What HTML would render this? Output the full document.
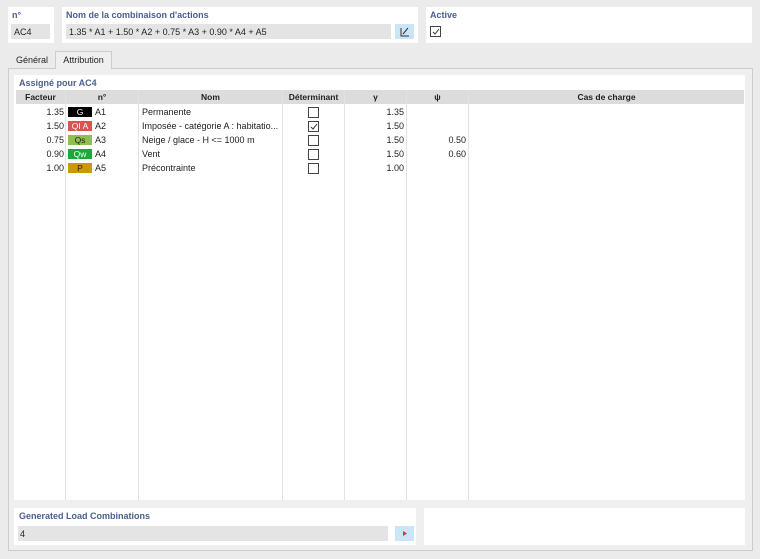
<!DOCTYPE html><html><head><style>
body{margin:0;width:760px;height:559px;background:#ebebeb;font-family:"Liberation Sans",sans-serif;font-size:9px;color:#222;position:relative;overflow:hidden}
.a{position:absolute}
.box{background:#fff}
.lbl{color:#4a5f8f;font-weight:bold;font-size:9px}
.field{background:#e4e4e4}
.cb{position:absolute;width:9px;height:9px;border:1px solid #444;background:#fff}
.tag{position:absolute;width:24px;height:10px;font-size:8.5px;text-align:center;line-height:10px}
.vl{position:absolute;top:90px;height:410px;width:1px;background:#e2e2e2}
.hd{position:absolute;top:90px;height:14px;background:#dcdcdc;line-height:14px;text-align:center;font-weight:bold;font-size:8.5px}
.r{position:absolute;text-align:right;width:30px;line-height:14px}
</style></head><body>
<div class="a box" style="left:8px;top:7px;width:46px;height:36px"></div>
<div class="a lbl" style="left:12px;top:10px">n°</div>
<div class="a field" style="left:11px;top:24px;width:39px;height:15px"></div>
<div class="a" style="left:14px;top:27px">AC4</div>
<div class="a box" style="left:62px;top:7px;width:356px;height:36px"></div>
<div class="a lbl" style="left:66px;top:10px">Nom de la combinaison d'actions</div>
<div class="a field" style="left:66px;top:24px;width:325px;height:15px"></div>
<div class="a" style="left:69px;top:27px">1.35 * A1 + 1.50 * A2 + 0.75 * A3 + 0.90 * A4 + A5</div>
<div class="a" style="left:395px;top:24px;width:19px;height:15px;background:#cce4f7"><svg width="19" height="15"><path d="M6 4v8h8M8 10l5-6" stroke="#333" fill="none" stroke-width="1"/></svg></div>
<div class="a box" style="left:426px;top:7px;width:326px;height:36px"></div>
<div class="a lbl" style="left:430px;top:10px">Active</div>
<div class="cb" style="left:430px;top:26px"></div><svg class="a" style="left:431px;top:27px" width="10" height="10"><path d="M2 5l2 2 4-5" stroke="#333" fill="none"/></svg>
<div class="a" style="left:8px;top:68px;width:745px;height:483px;border:1px solid #ccc;box-sizing:border-box;background:#efefef"></div>
<div class="a" style="left:9px;top:52px;width:46px;height:16px;line-height:16px;text-align:center">Général</div>
<div class="a" style="left:55px;top:51px;width:57px;height:18px;line-height:17px;text-align:center;background:#efefef;border:1px solid #ccc;border-bottom:none;box-sizing:border-box">Attribution</div>
<div class="a box" style="left:14px;top:75px;width:731px;height:425px"></div>
<div class="a lbl" style="left:19px;top:78px">Assigné pour AC4</div>
<div class="hd" style="left:16px;width:49px">Facteur</div>
<div class="hd" style="left:66px;width:72px">n°</div>
<div class="hd" style="left:139px;width:143px">Nom</div>
<div class="hd" style="left:283px;width:61px">Déterminant</div>
<div class="hd" style="left:345px;width:61px">γ</div>
<div class="hd" style="left:407px;width:61px">ψ</div>
<div class="hd" style="left:469px;width:275px">Cas de charge</div>
<div class="vl" style="left:65px"></div><div class="vl" style="left:138px"></div><div class="vl" style="left:282px"></div><div class="vl" style="left:344px"></div><div class="vl" style="left:406px"></div><div class="vl" style="left:468px"></div>
<div class="r" style="left:34px;top:105px">1.35<br>1.50<br>0.75<br>0.90<br>1.00</div>
<div class="tag" style="left:68px;top:107px;background:#000;color:#fff">G</div>
<div class="tag" style="left:68px;top:121px;background:#d9534f;color:#fff">QI A</div>
<div class="tag" style="left:68px;top:135px;background:#8fbf4f;color:#222">Qs</div>
<div class="tag" style="left:68px;top:149px;background:#1aaa3a;color:#fff">Qw</div>
<div class="tag" style="left:68px;top:163px;background:#c89a00;color:#222">P</div>
<div class="a" style="left:95px;top:105px;line-height:14px">A1<br>A2<br>A3<br>A4<br>A5</div>
<div class="a" style="left:142px;top:105px;line-height:14px">Permanente<br>Imposée - catégorie A : habitatio...<br>Neige / glace - H &lt;= 1000 m<br>Vent<br>Précontrainte</div>
<div class="cb" style="left:308px;top:107px"></div><div class="cb" style="left:308px;top:121px"></div><svg class="a" style="left:309px;top:122px" width="10" height="10"><path d="M2 5l2 2 4-5" stroke="#333" fill="none"/></svg><div class="cb" style="left:308px;top:135px"></div><div class="cb" style="left:308px;top:149px"></div><div class="cb" style="left:308px;top:163px"></div>
<div class="r" style="left:374px;top:105px">1.35<br>1.50<br>1.50<br>1.50<br>1.00</div>
<div class="r" style="left:436px;top:133px">0.50<br>0.60</div>
<div class="a box" style="left:14px;top:508px;width:402px;height:37px"></div>
<div class="a lbl" style="left:19px;top:511px">Generated Load Combinations</div>
<div class="a field" style="left:18px;top:526px;width:370px;height:15px"></div>
<div class="a" style="left:20px;top:529px">4</div>
<div class="a" style="left:395px;top:526px;width:19px;height:15px;background:#cce4f7"><svg width="19" height="15"><path d="M8 5l4 2.5-4 2.5z" fill="#d9362f"/></svg></div>
<div class="a box" style="left:424px;top:508px;width:321px;height:37px"></div>
</body></html>
